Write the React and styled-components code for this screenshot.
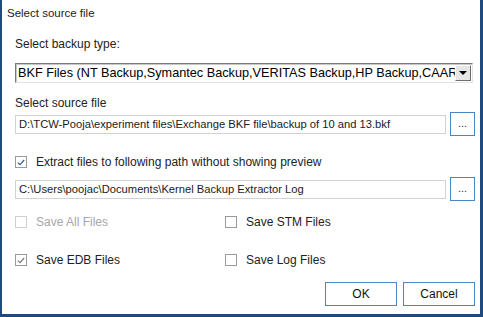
import React from "react";
import styled, { createGlobalStyle } from "styled-components";

const GlobalStyle = createGlobalStyle`
  html, body {
    margin: 0;
    padding: 0;
    background: #ffffff;
  }
  * {
    box-sizing: border-box;
  }
`;

const Window = styled.div`
  width: 483px;
  height: 317px;
  background: #ffffff;
  border-left: 2px solid #1f4a80;
  border-right: 3px solid #1f4a80;
  border-bottom: 3px solid #1f4a80;
  font-family: "Liberation Sans", Arial, sans-serif;
  color: #222;
  display: flex;
  flex-direction: column;
`;

const Title = styled.div`
  margin: 6px 0 0 5px;
  font-size: 11.5px;
  line-height: 14px;
  color: #222;
`;

const Body = styled.div`
  padding: 0 5px 0 13px;
  display: flex;
  flex-direction: column;
`;

const Label = styled.div`
  margin-top: ${(p) => p.$top}px;
  font-size: 12px;
  line-height: 14px;
`;

const SelectBox = styled.div`
  margin-top: 12px;
  width: 458px;
  height: 20px;
  display: flex;
  align-items: center;
  background: #fff;
  border-top: 1px solid #7a7a7a;
  border-left: 1px solid #7a7a7a;
  border-right: 1px solid #e3e3e3;
  border-bottom: 1px solid #e3e3e3;
  box-shadow: inset 1px 1px 0 #c8c8c8;
`;

const SelectText = styled.span`
  flex: 1;
  overflow: hidden;
  white-space: nowrap;
  font-size: 12.7px;
  line-height: 18px;
  padding-left: 2px;
  color: #000;
`;

const DropButton = styled.div`
  width: 16px;
  height: 16px;
  margin-right: 1px;
  background: #e6e6e6;
  border-top: 1px solid #fff;
  border-left: 1px solid #fff;
  border-right: 1px solid #6e6e6e;
  border-bottom: 1px solid #6e6e6e;
  display: flex;
  align-items: center;
  justify-content: center;

  &::after {
    content: "";
    border-left: 4px solid transparent;
    border-right: 4px solid transparent;
    border-top: 4px solid #000;
  }
`;

const PathRow = styled.div`
  margin-top: ${(p) => p.$top}px;
  height: 24px;
  display: flex;
  align-items: center;
  gap: 4px;
`;

const PathInput = styled.div`
  width: 432px;
  height: 19px;
  border: 1px solid #d2d2d2;
  font-size: 11.2px;
  line-height: 17px;
  padding-left: 3px;
  white-space: nowrap;
  overflow: hidden;
  color: #1a1a1a;
`;

const BrowseButton = styled.div`
  width: 25px;
  height: 24px;
  border: 1px solid #4a86c5;
  background: #fff;
  font-size: 11px;
  line-height: 20px;
  text-align: center;
  color: #333;
`;

const CheckRow = styled.label`
  margin-top: ${(p) => p.$top || 0}px;
  display: flex;
  align-items: center;
  gap: 9px;
  font-size: 12px;
  line-height: 14px;
  color: ${(p) => (p.$disabled ? "#a6a6a6" : "#222")};
`;

const Box = styled.span`
  width: 12px;
  height: 12px;
  border: 1px solid ${(p) => (p.$disabled ? "#cfcfcf" : "#9a9a9a")};
  background: #fff;
  display: flex;
  align-items: center;
  justify-content: center;
  flex: none;
`;

const Options = styled.div`
  margin-top: 14px;
  display: grid;
  grid-template-columns: 210px 1fr;
  row-gap: 24px;
`;

const Footer = styled.div`
  margin-top: 15px;
  display: flex;
  justify-content: flex-end;
  gap: 6px;
`;

const DialogButton = styled.div`
  width: 72px;
  height: 24px;
  border: 1px solid #4a86c5;
  background: #fff;
  font-size: 12px;
  line-height: 22px;
  text-align: center;
  color: #111;
`;

const Check = ({ color }) => (
  <svg width="8" height="7" viewBox="0 0 8 7">
    <path d="M0.8 3.6 L3 5.6 L7.2 1" fill="none" stroke={color} strokeWidth="1.2" />
  </svg>
);

const CheckBox = ({ label, checked, disabled, checkColor, top }) => (
  <CheckRow $disabled={disabled} $top={top}>
    <Box $disabled={disabled}>{checked && <Check color={checkColor} />}</Box>
    {label}
  </CheckRow>
);

export default function App() {
  return (
    <>
      <GlobalStyle />
      <Window>
        <Title>Select source file</Title>
        <Body>
          <Label $top={17}>Select backup type:</Label>
          <SelectBox>
            <SelectText>
              BKF Files (NT Backup,Symantec Backup,VERITAS Backup,HP Backup,CAARC Backup)
            </SelectText>
            <DropButton />
          </SelectBox>
          <Label $top={13}>Select source file</Label>
          <PathRow $top={2}>
            <PathInput>
              D:\TCW-Pooja\experiment files\Exchange BKF file\backup of 10 and 13.bkf
            </PathInput>
            <BrowseButton>...</BrowseButton>
          </PathRow>
          <CheckBox
            top={19}
            checked
            checkColor="#2f5d9a"
            label="Extract files to following path without showing preview"
          />
          <PathRow $top={8}>
            <PathInput>C:\Users\poojac\Documents\Kernel Backup Extractor Log</PathInput>
            <BrowseButton>...</BrowseButton>
          </PathRow>
          <Options>
            <CheckBox disabled label="Save All Files" />
            <CheckBox label="Save STM Files" />
            <CheckBox checked checkColor="#7a7a7a" label="Save EDB Files" />
            <CheckBox label="Save Log Files" />
          </Options>
          <Footer>
            <DialogButton>OK</DialogButton>
            <DialogButton>Cancel</DialogButton>
          </Footer>
        </Body>
      </Window>
    </>
  );
}
